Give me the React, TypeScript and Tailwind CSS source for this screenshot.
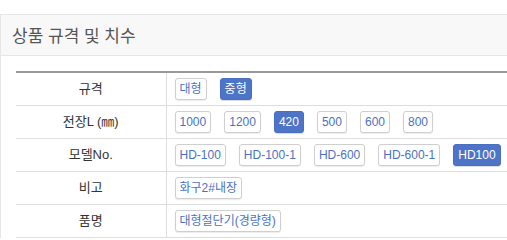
import React from 'react';

interface SpecRow {
  label: string;
  options: string[];
  active?: string;
}

const rows: SpecRow[] = [
  { label: '규격', options: ['대형', '중형'], active: '중형' },
  { label: '전장L (㎜)', options: ['1000', '1200', '420', '500', '600', '800'], active: '420' },
  { label: '모델No.', options: ['HD-100', 'HD-100-1', 'HD-600', 'HD-600-1', 'HD100'], active: 'HD100' },
  { label: '비고', options: ['화구2#내장'] },
  { label: '품명', options: ['대형절단기(경량형)'] },
];

function OptionButton({ text, active }: { text: string; active: boolean }) {
  return (
    <span
      className={
        active
          ? 'inline-flex h-[22px] shrink-0 items-center whitespace-nowrap rounded-[3px] border border-[#4a6fc0] bg-[#4d74c6] px-[4px] text-white shadow-[0_1px_1px_rgba(0,0,0,0.15)]'
          : 'inline-flex h-[22px] shrink-0 items-center whitespace-nowrap rounded-[3px] border border-[#cfcfcf] bg-white px-[4px] text-[#4a72c4] shadow-[0_1px_1px_rgba(0,0,0,0.08)]'
      }
    >
      {text}
    </span>
  );
}

export default function App() {
  return (
    <div
      className="overflow-hidden bg-white pt-[14px] text-[12px]"
      style={{ fontFamily: '"Liberation Sans", "Noto Sans CJK KR", sans-serif' }}
    >
      <div className="border-l border-t border-[#e6e6e6]">
        <div className="flex h-[41px] items-center border-b border-[#e6e6e6] bg-[#f8f8f8] pl-[11px] pt-[3px]">
          <h2 className="text-[17px] text-[#555]">상품 규격 및 치수</h2>
        </div>
        <div className="pl-[15px] pt-[15px]">
          <table className="w-full table-fixed border-collapse border-t-2 border-[#999]">
            <tbody>
              {rows.map((row) => (
                <tr key={row.label} className="h-[33px] border-b border-[#dddddd]">
                  <td className="w-[150px] border-r border-[#dddddd] text-center text-[13px] text-[#333]">
                    {row.label}
                  </td>
                  <td className="pl-[8px]">
                    <div className="flex items-center gap-[13px] whitespace-nowrap">
                      {row.options.map((opt) => (
                        <OptionButton key={opt} text={opt} active={opt === row.active} />
                      ))}
                    </div>
                  </td>
                </tr>
              ))}
            </tbody>
          </table>
        </div>
      </div>
    </div>
  );
}
